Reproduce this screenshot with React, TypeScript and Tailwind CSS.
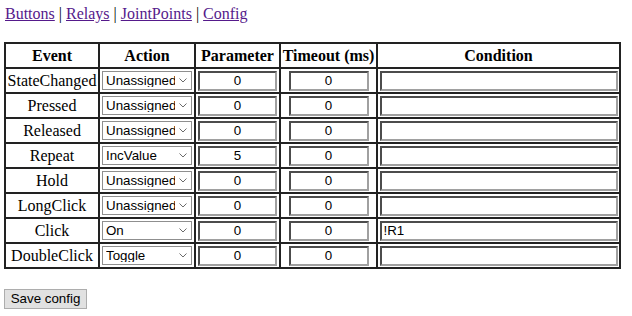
import React from "react";

type Row = {
  event: string;
  action: string;
  parameter: string;
  timeout: string;
  condition: string;
};

const actions = ["Unassigned", "On", "Off", "Toggle", "IncValue", "DecValue"];

const rows: Row[] = [
  { event: "StateChanged", action: "Unassigned", parameter: "0", timeout: "0", condition: "" },
  { event: "Pressed", action: "Unassigned", parameter: "0", timeout: "0", condition: "" },
  { event: "Released", action: "Unassigned", parameter: "0", timeout: "0", condition: "" },
  { event: "Repeat", action: "IncValue", parameter: "5", timeout: "0", condition: "" },
  { event: "Hold", action: "Unassigned", parameter: "0", timeout: "0", condition: "" },
  { event: "LongClick", action: "Unassigned", parameter: "0", timeout: "0", condition: "" },
  { event: "Click", action: "On", parameter: "0", timeout: "0", condition: "!R1" },
  { event: "DoubleClick", action: "Toggle", parameter: "0", timeout: "0", condition: "" },
];

const cell = "h-[25px] border border-solid border-[#222] p-px align-middle leading-[18px]";
const inputCls =
  "block h-[20px] border-2 [border-style:inset] border-[#a0a0a0] bg-white px-[2px] font-['Liberation_Sans',Arial,sans-serif] text-[13.33px] leading-none text-black outline-none";

function ActionSelect({ value }: { value: string }) {
  return (
    <div className="relative w-[90px]">
      <select
        defaultValue={value}
        className="block h-[19px] w-[90px] appearance-none rounded-none border border-solid border-[#8f8f8f] bg-white pl-[3px] pr-4 font-['Liberation_Sans',Arial,sans-serif] text-[13.33px] leading-none text-black outline-none"
      >
        {actions.map((a) => (
          <option key={a}>{a}</option>
        ))}
      </select>
      <svg
        className="pointer-events-none absolute right-[5px] top-[7px]"
        width="8"
        height="5"
        viewBox="0 0 8 5"
      >
        <polyline points="0.5,0.5 4,4 7.5,0.5" fill="none" stroke="#6b6b6b" strokeWidth="1" />
      </svg>
    </div>
  );
}

export default function App() {
  return (
    <div className="min-h-screen bg-white px-[5px] pt-[5px] font-['Liberation_Serif','Times_New_Roman',serif] text-[16px] leading-[18px] text-black">
      <div>
        <a href="#" className="text-[#551a8b] underline">Buttons</a> |{" "}
        <a href="#" className="text-[#551a8b] underline">Relays</a> |{" "}
        <a href="#" className="text-[#551a8b] underline">JointPoints</a> |{" "}
        <a href="#" className="text-[#551a8b] underline">Config</a>
      </div>

      <table className="mt-[19px] -ml-px w-[617px] table-fixed border-separate border-spacing-0 border border-solid border-[#222]">
        <colgroup>
          <col className="w-[94px]" />
          <col className="w-[96px]" />
          <col className="w-[85px]" />
          <col className="w-[97px]" />
          <col className="w-[243px]" />
        </colgroup>
        <thead>
          <tr>
            <th className={cell + " text-center font-bold"}>Event</th>
            <th className={cell + " text-center font-bold"}>Action</th>
            <th className={cell + " text-center font-bold"}>Parameter</th>
            <th className={cell + " whitespace-nowrap text-center font-bold"}>Timeout (ms)</th>
            <th className={cell + " text-center font-bold"}>Condition</th>
          </tr>
        </thead>
        <tbody>
          {rows.map((r) => (
            <tr key={r.event}>
              <td className={cell + " text-center"}>{r.event}</td>
              <td className={cell + " pl-[2px]"}>
                <ActionSelect value={r.action} />
              </td>
              <td className={cell}>
                <input defaultValue={r.parameter} className={inputCls + " mx-auto w-[79px] text-center"} />
              </td>
              <td className={cell}>
                <input defaultValue={r.timeout} className={inputCls + " mx-auto w-[80px] text-center"} />
              </td>
              <td className={cell}>
                <input defaultValue={r.condition} className={inputCls + " mx-auto w-[238px] text-left"} />
              </td>
            </tr>
          ))}
        </tbody>
      </table>

      <button className="mt-[20px] -ml-px h-[20px] w-[83px] border border-solid border-[#adadad] bg-[#e1e1e1] font-['Liberation_Sans',Arial,sans-serif] text-[13.33px] leading-none text-black">
        Save config
      </button>
    </div>
  );
}
